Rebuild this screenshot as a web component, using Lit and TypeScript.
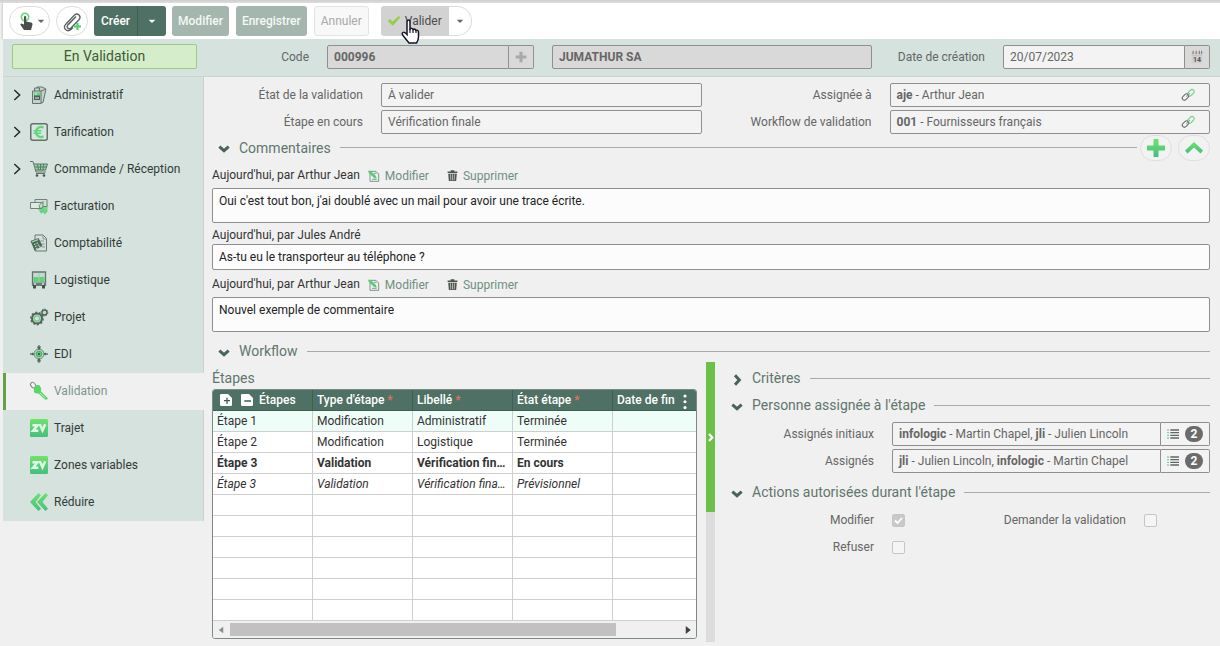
import { LitElement, html, svg, css, nothing, TemplateResult } from "lit";
import { customElement, property, state } from "lit/decorators.js";
import { classMap } from "lit/directives/class-map.js";

const gradient = svg`<defs><linearGradient id="g" x1="0" y1="0" x2="0" y2="1"><stop offset="0" stop-color="#6fe36a"/><stop offset="1" stop-color="#43bf80"/></linearGradient></defs>`;

const icons: Record<string, TemplateResult> = {
  admin: svg`<path d="M2.5 5h8.5v12.500H2.500zM4.500 5V2h5v3M7 2V1h5l4 2-3 13.500-2 .5M11 5l4-1.500" fill="#c3d3cb" stroke="#66736d"/><path d="M4 6.500h6V14H4z" fill="#5fd57c"/><path d="M4 9.500h6V14H4z" fill="#4d6159"/><path d="M5 8h2M5 12h4" stroke="#e6f6ec"/>`,
  euro: svg`<rect x=".75" y=".75" width="16.500" height="16.500" rx="2" fill="#d7e6de" stroke="#66716c" stroke-width="1.500"/><path d="M13.500 4.700A5 5 0 0 0 6 9a5 5 0 0 0 7.500 4.300" fill="none" stroke="#62d67c" stroke-width="2.200"/><path d="M3.500 7.800h8M3.500 10.300h7.500" stroke="#62d67c" stroke-width="1.500"/>`,
  cart: svg`<path d="M4 4h13.500l-2 7H6z" fill="#85dda0"/><path d="M0 1.500h3l3 10.500h10M3.700 4h13.800l-2 6H5.500M5 7h11.500M7.500 4l1 6M10.500 4v6M13.500 4l-.5 6" fill="none" stroke="#66736d"/><path d="M6 13.500h9" stroke="#66736d"/><circle cx="7" cy="15.500" r="1.300" fill="#46544e"/><circle cx="14" cy="15.500" r="1.300" fill="#46544e"/>`,
  bills: svg`<path d="M8 7h9.500v6H8z" fill="#6fdd88"/><path d="M5 2.500h12v7H5z" fill="#cfe2d7" stroke="#74817b"/><path d="M.5 5.500h11.500v6H.5z" fill="#dceae2" stroke="#74817b"/><path d="M9 8.500l4-4v6l-3 1z" fill="#b6e5c3" stroke="#6f8379"/><path d="M10 13l1.500 2 2-1.500 1.500 2 2-2.500" fill="none" stroke="#62d67c" stroke-width="2.500"/>`,
  calc: svg`<path d="M5 1h8l3.500 3.500V17H5z" fill="#d5e2dc" stroke="#6b7771"/><path d="M13 1v4h3.500M8 7h6M11 10h4M12 13h3" fill="none" stroke="#8a9a92"/><path d="M.5 7l8-3 4 8-8 4.500z" fill="#52645c"/><path d="M2 8l6-2.300M4 10.500l1.500-.7M6.500 9.500L8 8.800M5 12.700l1.500-.7M7.700 11.500l1.500-.7M6 14.800l1.500-.8M9 13l1.300-.7" stroke="#9ae3ad" stroke-width="1.300"/>`,
  truck: svg`<path d="M2.500 1h13v13h-13z" fill="#c8d8d0" stroke="#66736d" stroke-width="1.300"/><path d="M3.500 6h11v5h-11z" fill="#5ed47a"/><path d="M9 2v9" stroke="#a9c8b5"/><path d="M2 11.500h14V15H2z" fill="#6f7c76"/><path d="M3 14h3v3.500H3zM12 14h3v3.500h-3z" fill="#45524c"/><circle cx="5" cy="13" r="1" fill="#d9e8e0"/><circle cx="13" cy="13" r="1" fill="#d9e8e0"/>`,
  gears: svg`<circle cx="7" cy="10.500" r="5" fill="#a9dcb6" stroke="#56645e" stroke-width="2"/><circle cx="7" cy="10.500" r="6.200" fill="none" stroke="#56645e" stroke-width="1.400" stroke-dasharray="2 1.800"/><circle cx="7" cy="10.500" r="2.600" fill="#d5e2dc" stroke="#58c974"/><circle cx="14.500" cy="4.500" r="2.500" fill="#b9e3c4" stroke="#56645e" stroke-width="1.400"/><circle cx="14.500" cy="4.500" r="3.400" fill="none" stroke="#56645e" stroke-dasharray="1.400 1.200"/>`,
  edi: svg`<circle cx="9" cy="9" r="5" fill="#a5dcb4" stroke="#74877e"/><circle cx="9" cy="9" r="2.800" fill="#5bd077" stroke="#5c9f76"/><circle cx="9" cy="9" r="1" fill="#33433c"/><path d="M9 0v5M9 13v5M0 9h4M14 9h4" stroke="#66736d" stroke-width="1.300"/><path d="M7 1.500h4L10 4H8zM7 16.500h4L10 14H8zM2 7.500v3L4.500 9zM16 7.500v3L13.500 9z" fill="#55625c"/>`,
  key: svg`<ellipse cx="3" cy="3.200" rx="2.200" ry="3" transform="rotate(-40 3 3)" fill="#f7f7f7" stroke="#7d8781"/><path d="M4.500 4.500q2-2 5-1.200l1.700 3-.4 3 7.200 7-1.500 1.500-1.500-.3-6.500-6-3.200-.2q-2-1.500-1.500-4z" fill="#57d765"/><path d="M10 11l5.500 5" stroke="#b4f3bb"/>`,
  zv: svg`${gradient}<rect width="18" height="18" rx="1.500" fill="url(#g)"/><path d="M2.500 6.200h5L3 11.800h5.300M9.800 5.200l2.700 6 2.700-6" fill="none" stroke="#e3fbe9" stroke-width="2.500"/>`,
  reduce: svg`${gradient}<path d="M8.500 0l2.500 2.200L5.500 9l5.500 6.800L8.500 18 0 9zM15.500 0L18 2.200 12.500 9l5.500 6.800-2.500 2.200L7 9z" fill="url(#g)"/>`,
  hand: svg`<circle cx="8" cy="5" r="3.700" fill="none" stroke="#5fd57c" stroke-width="1.600"/><path d="M7 4.500q1.200-1.200 2.200 0v5l5 1q1.500.5 1.300 2L14 18H7l-3.500-5q-.7-1.500.8-1.500L7 12.500z" fill="#4a4f4d"/>`,
  clip: svg`<path d="M3 12L11.500 3q2.500-2 4.500 0t.2 4.500L8 16q-2 1.500-3.300 0t.1-3.200L12 5.500M3 12q-3 3-.5 5.500t5.500 0l2-2M5 13l8-8.500" fill="none" stroke="#59635e" stroke-width="1.300"/><path d="M14.500 11v7M11 14.500h7" stroke="#45d163" stroke-width="2"/>`,
  check: svg`<path d="M1 9l3-2.500 3 3.500 8-7.500 2 2L7.500 15z" fill="#93cf3f"/>`,
  caret: svg`<path d="M4 7h10l-5 5z" fill="currentColor"/>`,
  right: svg`<path d="M5 1.500L13 9l-8 7.500" fill="none" stroke="#222b27" stroke-width="2.200"/>`,
  chevron: svg`<path d="M2 5.500l7 6 7-6" fill="none" stroke="currentColor" stroke-width="4.500"/>`,
  chevronRight: svg`<path d="M6 2l6.500 7L6 16" fill="none" stroke="currentColor" stroke-width="4.500"/>`,
  plus: svg`<path d="M9 3v12M3 9h12" stroke="#a9a9a9" stroke-width="3.500"/>`,
  bigPlus: svg`${gradient}<path d="M7 0h4q.5 0 .5.500V6.500h6q.5 0 .5.500v4q0 .5-.5.500h-6v6q0 .5-.5.500H7q-.5 0-.5-.5v-6h-6Q0 11.500 0 11V7q0-.5.500-.5h6v-6Q6.500 0 7 0z" fill="url(#g)"/>`,
  up: svg`${gradient}<path d="M9 3l9 8.500-2.500 3L9 8.500l-6.500 6-2.500-3z" fill="url(#g)"/>`,
  calendar: svg`<path d="M2 3h14v14H2z" fill="#cfcfcf"/><path d="M2 7h14" stroke="#c0c0c0"/><path d="M4 1v4M8 1v4M12 1v4M15 1v4" stroke="#777" stroke-width="1.300"/><text x="9" y="15.500" text-anchor="middle" font-size="9" font-weight="700" fill="#555" font-family="Roboto">14</text>`,
  link: svg`<rect x="8" y="3.500" width="9.500" height="5.500" rx="2.700" transform="rotate(-45 12.700 6.200)" fill="none" stroke="#6fce83" stroke-width="1.400"/><rect x="1" y="9" width="9.500" height="5.500" rx="2.700" transform="rotate(-45 5.700 11.700)" fill="none" stroke="#6a706d" stroke-width="1.400"/><path d="M7 11l4.500-4.500" stroke="#85a58e" stroke-width="1.300"/>`,
  edit: svg`<path d="M3 2h9l4 4v11H3z" fill="#edf3ef" stroke="#7c8a83" stroke-width="1.400"/><path d="M0 1l4 0 8 8 1 4-4-1-8-8z" fill="#5ccb75"/><path d="M6 14h7M9 5h4" stroke="#7c8a83" stroke-width="1.300"/>`,
  trash: svg`<path d="M1 2.500h16V5H1zM6 .5h6v2H6zM2 6h14l-1 12H3z" fill="#4d5450"/><path d="M5.700 7l.5 10M9 7v10M12.300 7l-.5 10" stroke="#d5d8d6" stroke-width="1.200"/>`,
  list: svg`<path d="M0 3h3M0 7h3M0 11h3M0 15h3" stroke="#7fdc90" stroke-width="2"/><path d="M5 3h13M5 7h13M5 11h13M5 15h13" stroke="#606663" stroke-width="2"/>`,
  expand: svg`<path d="M2 0h10l6 6v10q0 2-2 2H2q-2 0-2-2V2q0-2 2-2z" fill="#fff"/><path d="M10.500 5.500v9M6 10h9" stroke="#3f5e52" stroke-width="2"/>`,
  collapse: svg`<path d="M2 0h10l6 6v10q0 2-2 2H2q-2 0-2-2V2q0-2 2-2z" fill="#fff"/><path d="M5 10.500h10" stroke="#3f5e52" stroke-width="2.200"/>`,
  dots: svg`<circle cx="9" cy="2.500" r="2" fill="#fff"/><circle cx="9" cy="10" r="2" fill="#fff"/><circle cx="9" cy="17.500" r="2" fill="#fff"/>`,
  arrowLeft: svg`<path d="M13 3v12L5 9z" fill="#8d8d8d"/>`,
  arrowRight: svg`<path d="M5 2v14l9-7z" fill="#404040"/>`,
};

@customElement("ui-icon")
class UiIcon extends LitElement {
  @property() name = "";
  @property({ type: Number }) size = 18;
  static styles = css`
    :host { display: inline-flex; flex: none; }
    svg { display: block; overflow: visible; }
  `;
  render() {
    return html`<svg width=${this.size} height=${this.size} viewBox="0 0 18 18" aria-hidden="true">${icons[this.name]}</svg>`;
  }
}

@customElement("section-title")
class SectionTitle extends LitElement {
  @property() text = "";
  @property({ type: Boolean }) closed = false;
  static styles = css`
    :host { display: flex; align-items: center; min-height: 22px; padding-left: 6px; color: #5f766d; }
    h2 { margin: 0; font: 400 14px/20px Roboto, sans-serif; }
    .toggle { display: flex; align-items: center; gap: 9px; padding: 0; border: 0; background: none; color: inherit; font: inherit; }
    .toggle ui-icon { padding-top: 3px; color: #48645a; }
    .line { flex: 1; height: 1px; margin-left: 9px; background: #a3aca8; }
  `;
  render() {
    return html`<h2><button class="toggle" aria-expanded=${!this.closed}>
      <ui-icon size="12" name=${this.closed ? "chevronRight" : "chevron"}></ui-icon><span>${this.text}</span></button></h2>
      <span class="line"></span><slot></slot>`;
  }
}

const menu = [
  { icon: "admin", label: "Administratif", sub: true },
  { icon: "euro", label: "Tarification", sub: true },
  { icon: "cart", label: "Commande / Réception", sub: true },
  { icon: "bills", label: "Facturation" },
  { icon: "calc", label: "Comptabilité" },
  { icon: "truck", label: "Logistique" },
  { icon: "gears", label: "Projet" },
  { icon: "edi", label: "EDI" },
  { icon: "key", label: "Validation" },
  { icon: "zv", label: "Trajet" },
  { icon: "zv", label: "Zones variables" },
  { icon: "reduce", label: "Réduire" },
];

const comments = [
  { author: "Aujourd'hui, par Arthur Jean", text: "Oui c'est tout bon, j'ai doublé avec un mail pour avoir une trace écrite.", own: true },
  { author: "Aujourd'hui, par Jules André", text: "As-tu eu le transporteur au téléphone ?", own: false },
  { author: "Aujourd'hui, par Arthur Jean", text: "Nouvel exemple de commentaire", own: true },
];

const steps = [
  { cells: ["Étape 1", "Modification", "Administratif", "Terminée"], kind: "selected" },
  { cells: ["Étape 2", "Modification", "Logistique", "Terminée"], kind: "" },
  { cells: ["Étape 3", "Validation", "Vérification finale", "En cours"], kind: "current" },
  { cells: ["Étape 3", "Validation", "Vérification finale", "Prévisionnel"], kind: "planned" },
  ...Array.from({ length: 6 }, () => ({ cells: ["", "", "", ""], kind: "" })),
];

@customElement("app-root")
class AppRoot extends LitElement {
  @state() private active = "Validation";

  static styles = css`
    :host { display: block; min-height: 100vh; box-sizing: border-box; padding: 3px 0 4px 3px; background: #f0f0f0; color: #333; font: 12px/16px Roboto, sans-serif; position: relative; }
    :host::before { content: ""; position: absolute; inset: 0 0 auto 0; height: 3px; background: linear-gradient(#cfcfcf, #dedede); }
    *, *::before { box-sizing: border-box; }
    button, input, textarea { font: inherit; }

    .toolbar { display: flex; align-items: center; gap: 6px; height: 36px; padding: 0 6px; background: #fff; box-shadow: -1px 0 2px #ccc; }
    .toolbar button { display: flex; align-items: center; justify-content: center; height: 30px; padding: 0 7px; border: 0; border-radius: 3px; white-space: nowrap; }
    .toolbar .pill { border: 1px solid #dcdcdc; border-radius: 15px; background: #fff; color: #5d6f68; }
    .toolbar .hand { width: 41px; padding: 0 0 0 4px; }
    .toolbar .clip { width: 32px; padding: 0; }
    .split { display: flex; }
    .toolbar .create { border-radius: 3px 0 0 3px; background: #4f7064; color: #fff; font-weight: 500; }
    .toolbar .create-more { width: 29px; border-left: 1px solid #3f5f53; border-radius: 0 3px 3px 0; background: #4f7064; color: #fff; }
    .toolbar .muted { margin-right: 1px; padding: 0 6px; background: #a5b6af; color: #f4f8f6; font-weight: 500; }
    .toolbar .ghost { padding: 0 6px; border: 1px solid #e4e4e4; background: #f8f8f8; color: #a9a9a9; }
    .validate { margin-left: 6px; }
    .toolbar .ok { gap: 4px; padding: 0 7px 0 6px; border-radius: 3px 0 0 3px; background: #d2d2d2; color: #4c4c4c; }
    .toolbar .ok-more { width: 23px; padding: 0; border: 1px solid #dcdcdc; border-left: 0; border-radius: 0 15px 15px 0; background: #fff; color: #5d6f68; }
    .cursor { position: absolute; left: 401px; top: 19px; width: 19px; height: 26px; }

    .header { display: flex; align-items: center; height: 38px; padding: 0 10px 2px 0; border-bottom: 1px solid #c9d5d0; background: #d5e2dd; }
    .status { width: 185px; height: 25px; margin: 0 7px 0 9px; border: 1px solid #9ccb83; border-radius: 2px; background: #d5edcb; color: #3d5b35; font-size: 14px; line-height: 23px; text-align: center; }
    label, .label { color: #666; text-align: right; }
    .header label { padding-right: 18px; }
    .l-code { width: 123px; }
    .l-date { width: 131px; }
    .group { display: flex; flex: 207 1 0; min-width: 0; }
    .field { width: 100%; min-width: 0; height: 24px; padding: 0 6px; border: 1px solid #8f8f8f; border-radius: 2px; background: #f3f3f3; color: #666; outline: 0; }
    .group .field { flex: 1; border-radius: 2px 0 0 2px; }
    .group .grey, .grey { background: #d9d9d9; font-weight: 700; }
    .name { display: flex; flex: 320 1 0; min-width: 0; margin-left: 18px; }
    .addon { display: flex; align-items: center; justify-content: center; width: 25px; height: 24px; padding: 0; border: 1px solid #8f8f8f; border-left: 0; border-radius: 0 2px 2px 0; background: #d9d9d9; }

    .body { display: flex; align-items: flex-start; }
    .side { width: 201px; flex: none; background: #d5e2dd; }
    .item { display: flex; align-items: center; width: 100%; height: 37px; padding: 0 0 2px 8px; border: 0; border-right: 1px solid #c6d3cd; background: none; color: #333b37; text-align: left; text-decoration: none; }
    .item .twist { display: flex; width: 19px; padding-top: 1px; }
    .item .text { padding-left: 6px; }
    .item.active { padding-left: 5px; border-right: 0; border-left: 3px solid #62a04a; background: #f0f0f0; color: #7d968b; }

    main { flex: 1; min-width: 0; padding: 6px 10px 0 8px; }
    .fields { display: grid; grid-template-columns: 151px 1fr 152px 1fr; align-items: center; gap: 3px 18px; }
    output.field { display: flex; align-items: center; white-space: pre; overflow: hidden; }
    output.field b { font-weight: 700; }
    .link { margin-left: auto; padding-right: 8px; }
    .tall { min-height: 27px; }
    .round { display: flex; align-items: center; justify-content: center; width: 32px; height: 26px; margin-left: 6px; padding: 0; border: 1px solid #dfdfdf; border-radius: 14px; background: #f2f2f2; }
    .round.first { margin-left: 3px; }
    .meta { display: flex; align-items: center; height: 27px; padding-top: 1px; }
    .meta.plain { height: 21px; padding-top: 2px; }
    .author { color: #333; }
    .action { display: flex; align-items: center; gap: 5px; margin-left: 8px; padding: 1px 0 0; border: 0; background: none; color: #6f8f82; }
    .action.second { margin-left: 18px; }
    .comment { display: block; width: 100%; height: 35px; padding: 5px 6px; border: 1px solid #8f8f8f; border-radius: 2px; background: #fcfcfc; color: #222; line-height: 14px; resize: none; outline: 0; overflow: hidden; }
    .comment.short { height: 26px; }
    .workflow { margin-top: 8px; }

    .panes { display: grid; grid-template-columns: minmax(0, 485fr) 9px minmax(0, 486fr); gap: 9px; }
    .splitter { background: #dcdcdc; }
    .grip { display: flex; align-items: center; justify-content: center; width: 9px; height: 150px; padding: 0; border: 0; background: #6cc04a; color: #fff; }
    .left { padding: 5px 0 3px; }
    .caption { margin: 0; height: 22px; font: 400 14px/22px Roboto, sans-serif; color: #5f766d; }
    .grid { border: 1px solid #7d8a84; border-radius: 3px; background: #fff; overflow: hidden; }
    table { width: 100%; border-collapse: separate; border-spacing: 0; table-layout: fixed; }
    .col { width: 100px; }
    th, td { height: 21px; padding: 0 6px 0 4px; border-right: 1px solid #cfcfcf; border-bottom: 1px solid #cfcfcf; line-height: 16px; text-align: left; white-space: nowrap; overflow: hidden; text-overflow: ellipsis; }
    th { padding-right: 4px; border-color: #3f5f53; background: #4f7064; color: #fff; font-weight: 500; text-overflow: clip; }
    th:last-child, td:last-child { border-right: 0; }
    .head { display: flex; align-items: center; }
    .head .tool { display: flex; margin: 0 9px 0 0; padding: 0; border: 0; background: none; }
    .head .tool.lead { margin-left: 3px; }
    .head .tool.next { margin-right: 6px; }
    .head .cut { flex: 1; }
    .head .tool.more { margin: 0; padding: 2px 0 0; }
    .star { color: #e0705c; }
    .selected td { background: #effdf9; }
    .current td { font-weight: 700; }
    .planned td { font-style: italic; }
    .scroll { display: flex; align-items: center; height: 17px; padding: 0 3px; background: #f0f0f0; }
    .track { flex: 1; margin: 0 4px; }
    .thumb { width: 86%; height: 13px; background: #c1c1c1; }

    .right { padding: 5px 0 0 1px; }
    .gap { margin-top: 5px; }
    .gap-top { margin-top: 8px; }
    .assign { display: grid; grid-template-columns: 149px minmax(0, 1fr); align-items: center; gap: 3px 18px; margin-top: 6px; }
    .assign .group { flex: none; }
    .multi { display: flex; align-items: center; gap: 6px; width: 49px; height: 24px; padding: 0 6px; border: 1px solid #8f8f8f; border-left: 0; border-radius: 0 2px 2px 0; background: #f3f3f3; }
    .badge { width: 18px; height: 16px; border-radius: 8px; background: #6b6b6b; color: #fff; font-weight: 700; line-height: 16px; text-align: center; }
    .checks { display: grid; grid-template-columns: 149px 1fr auto 66px; align-items: center; gap: 3px 18px; grid-auto-rows: 24px; margin-top: 5px; }
    .box { appearance: none; width: 13px; height: 13px; margin: 0; border: 1px solid #c6c6c6; border-radius: 2px; background: #f5f5f5 center / 11px 11px no-repeat; }
    .box:checked { background-color: #c9c9c9; background-image: url("data:image/svg+xml,%3Csvg xmlns='http://www.w3.org/2000/svg' viewBox='0 0 11 11'%3E%3Cpath d='M2 5.500l2.500 2.500L9 3' fill='none' stroke='white' stroke-width='1.800'/%3E%3C/svg%3E"); }
  `;

  private toolbar() {
    return html`<div class="toolbar" role="toolbar">
      <button class="pill hand" aria-label="Actions"><ui-icon name="hand" size="18"></ui-icon><ui-icon name="caret" size="12"></ui-icon></button>
      <button class="pill clip" aria-label="Pièces jointes"><ui-icon name="clip" size="18"></ui-icon></button>
      <div class="split"><button class="create">Créer</button><button class="create-more" aria-label="Plus"><ui-icon name="caret" size="12"></ui-icon></button></div>
      <button class="muted">Modifier</button>
      <button class="muted">Enregistrer</button>
      <button class="ghost">Annuler</button>
      <div class="split validate"><button class="ok"><ui-icon name="check" size="14"></ui-icon>Valider</button><button class="ok-more" aria-label="Plus"><ui-icon name="caret" size="12"></ui-icon></button></div>
    </div>
    <svg class="cursor" viewBox="0 0 19 26" aria-hidden="true"><path d="M6 3q0-2 1.500-2T9 3v7q2-1.500 3 .5 2-1 3 .8 2.500-.6 2.500 2V18q0 3-2 6H8L2 16.500q-1.500-2 0-3t4 2z" fill="#fff" stroke="#15152b" stroke-width="1.500"/><path d="M9 10v4M12 10.500V14M15 11.300V14" stroke="#15152b" stroke-width="1.200"/></svg>`;
  }

  private header() {
    return html`<header class="header">
      <div class="status">En Validation</div>
      <label class="l-code" for="code">Code</label>
      <div class="group"><input id="code" class="field grey" readonly .value=${"000996"}><button class="addon" aria-label="Ajouter"><ui-icon name="plus" size="16"></ui-icon></button></div>
      <div class="name"><input class="field grey" aria-label="Nom" readonly .value=${"JUMATHUR SA"}></div>
      <label class="l-date" for="date">Date de création</label>
      <div class="group"><input id="date" class="field" readonly .value=${"20/07/2023"}><button class="addon" aria-label="Calendrier"><ui-icon name="calendar" size="14"></ui-icon></button></div>
    </header>`;
  }

  private sidebar() {
    return html`<nav class="side">${menu.map((m) => html`
      <a href="#" class=${classMap({ item: true, active: m.label === this.active })}
        @click=${(e: Event) => { e.preventDefault(); this.active = m.label; }}>
        <span class="twist">${m.sub ? html`<ui-icon name="right" size="12"></ui-icon>` : nothing}</span>
        <ui-icon name=${m.icon} size="18"></ui-icon><span class="text">${m.label}</span>
      </a>`)}</nav>`;
  }

  private commentList() {
    return comments.map((c, i) => html`
      <div class=${classMap({ meta: true, plain: !c.own })}><label for="c${i}" class="author">${c.author}</label>
        ${c.own ? html`<button class="action"><ui-icon name="edit" size="12"></ui-icon>Modifier</button>
          <button class="action second"><ui-icon name="trash" size="11"></ui-icon>Supprimer</button>` : nothing}
      </div>
      <textarea id="c${i}" class=${classMap({ comment: true, short: !c.own })} readonly .value=${c.text}></textarea>`);
  }

  private table() {
    const star = html`<span class="star"> *</span>`;
    return html`<div class="left">
      <h3 class="caption">Étapes</h3>
      <div class="grid">
        <table>
          <colgroup><col class="col"><col class="col"><col class="col"><col class="col"><col></colgroup>
          <thead><tr>
            <th><div class="head"><button class="tool lead" aria-label="Déplier"><ui-icon name="expand" size="12"></ui-icon></button><button class="tool next" aria-label="Replier"><ui-icon name="collapse" size="12"></ui-icon></button>Étapes</div></th>
            <th>Type d'étape${star}</th><th>Libellé${star}</th><th>État étape${star}</th>
            <th><div class="head"><span class="cut">Date de fin</span><button class="tool more" aria-label="Colonnes"><ui-icon name="dots" size="14"></ui-icon></button></div></th>
          </tr></thead>
          <tbody>${steps.map((s) => html`<tr class=${s.kind}>${s.cells.map((c) => html`<td>${c}</td>`)}<td></td></tr>`)}</tbody>
        </table>
        <div class="scroll"><ui-icon name="arrowLeft" size="10"></ui-icon><div class="track"><div class="thumb"></div></div><ui-icon name="arrowRight" size="10"></ui-icon></div>
      </div>
    </div>`;
  }

  private multi(id: string, value: TemplateResult) {
    return html`<div class="group"><output id=${id} class="field">${value}</output>
      <button class="multi" aria-label="Liste"><ui-icon name="list" size="12"></ui-icon><span class="badge">2</span></button></div>`;
  }

  private details() {
    return html`<div class="right">
      <section-title text="Critères" closed></section-title>
      <section-title class="gap" text="Personne assignée à l'étape"></section-title>
      <div class="assign">
        <label for="init">Assignés initiaux</label>${this.multi("init", html`<b>infologic</b> - Martin Chapel, <b>jli</b> - Julien Lincoln`)}
        <label for="cur">Assignés</label>${this.multi("cur", html`<b>jli</b> - Julien Lincoln, <b>infologic</b> - Martin Chapel`)}
      </div>
      <section-title class="gap-top" text="Actions autorisées durant l'étape"></section-title>
      <div class="checks">
        <label for="k1">Modifier</label><input id="k1" class="box" type="checkbox" checked disabled>
        <label for="k2">Demander la validation</label><input id="k2" class="box" type="checkbox" disabled>
        <label for="k3">Refuser</label><input id="k3" class="box" type="checkbox" disabled>
      </div>
    </div>`;
  }

  render() {
    const link = html`<ui-icon class="link" name="link" size="14"></ui-icon>`;
    return html`${this.toolbar()}${this.header()}
      <div class="body">${this.sidebar()}
        <main>
          <div class="fields">
            <label for="f1">État de la validation</label><input id="f1" class="field" readonly .value=${"À valider"}>
            <label for="f2">Assignée à</label><output id="f2" class="field"><b>aje</b> - Arthur Jean${link}</output>
            <label for="f3">Étape en cours</label><input id="f3" class="field" readonly .value=${"Vérification finale"}>
            <label for="f4">Workflow de validation</label><output id="f4" class="field"><b>001</b> - Fournisseurs français${link}</output>
          </div>
          <section-title class="tall" text="Commentaires">
            <button class="round first" aria-label="Ajouter un commentaire"><ui-icon name="bigPlus" size="18"></ui-icon></button><button class="round" aria-label="Replier"><ui-icon name="up" size="18"></ui-icon></button>
          </section-title>
          ${this.commentList()}
          <section-title class="workflow" text="Workflow"></section-title>
          <div class="panes">${this.table()}
            <div class="splitter"><button class="grip" aria-label="Redimensionner"><ui-icon name="chevronRight" size="9"></ui-icon></button></div>
            ${this.details()}</div>
        </main>
      </div>`;
  }
}
